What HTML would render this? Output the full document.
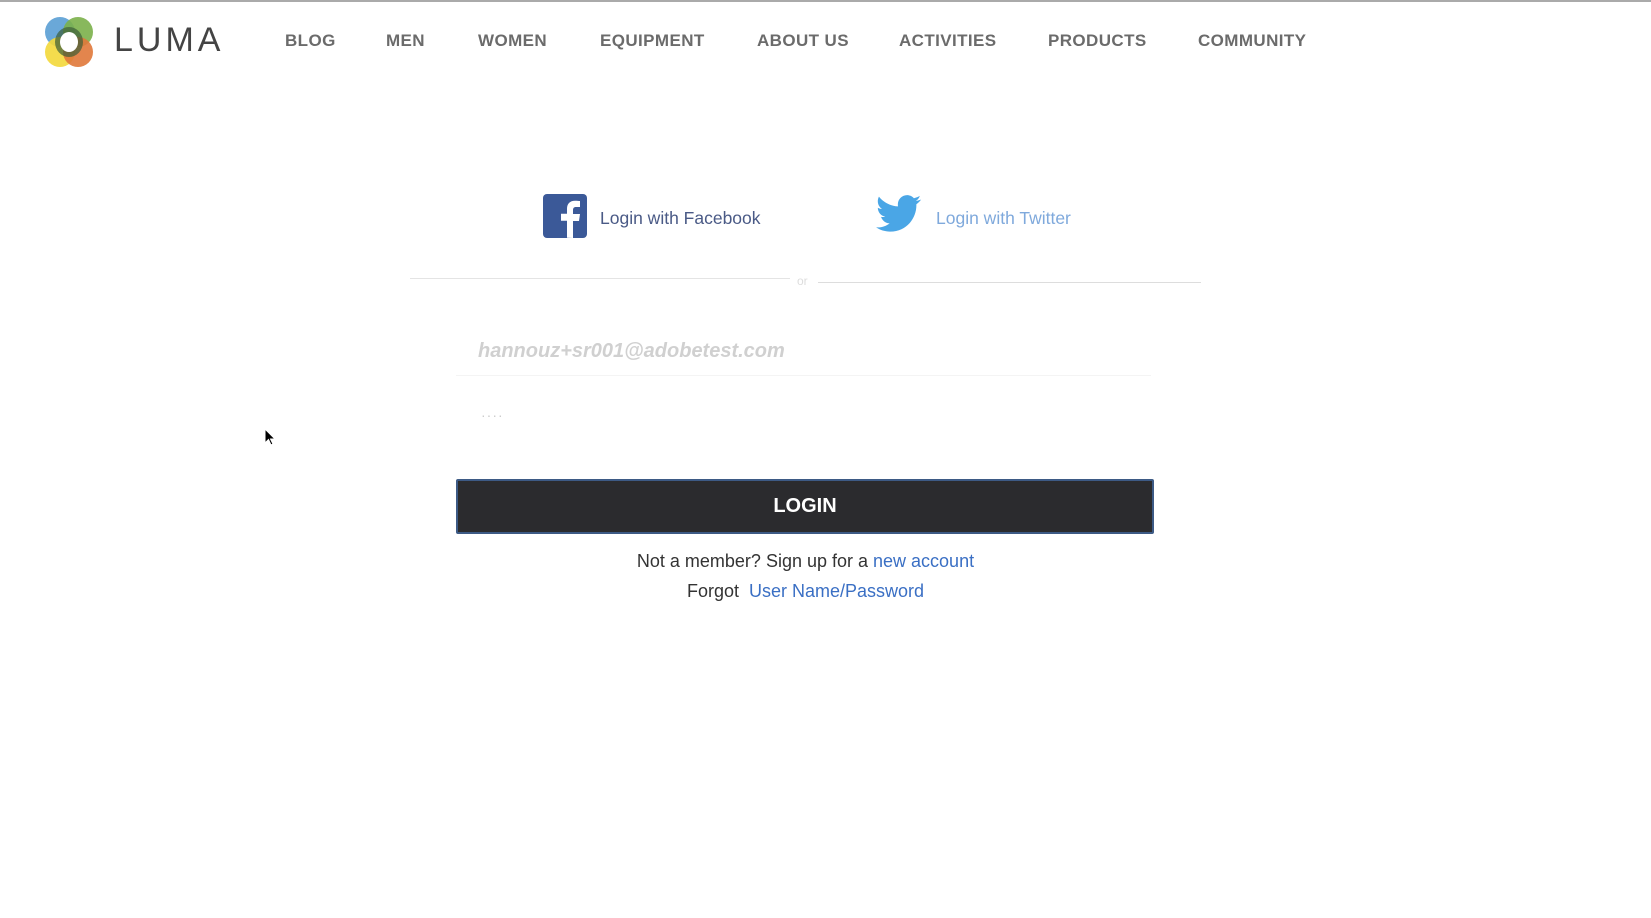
<!DOCTYPE html>
<html><head><meta charset="utf-8"><style>
body{margin:0;width:1651px;height:918px;background:#fff;font-family:"Liberation Sans",sans-serif;position:relative;overflow:hidden}
.top{position:absolute;left:0;top:0;width:1651px;height:2px;background:#aaa}
.a{position:absolute;white-space:nowrap}
.nav{top:31px;font-size:17px;letter-spacing:0.4px;font-weight:bold;color:#6b6b6b}
</style></head><body>
<div class="top"></div>
<svg class="a" style="left:38px;top:12px" width="62" height="60" viewBox="0 0 62 60">
<ellipse cx="22" cy="20" rx="15" ry="15" fill="#5a9fd4" opacity=".9"/>
<ellipse cx="40" cy="20" rx="15" ry="15" fill="#7bb04a" opacity=".9"/>
<ellipse cx="22" cy="40" rx="15" ry="15" fill="#f3d83a" opacity=".9"/>
<ellipse cx="40" cy="40" rx="15" ry="15" fill="#e0783a" opacity=".9"/>
<ellipse cx="31" cy="30" rx="14" ry="15" fill="#3c5c38" opacity=".7"/>
<ellipse cx="31" cy="30" rx="9" ry="10" fill="#fff"/>
</svg>
<div class="a" style="left:114px;top:21px;font-size:34px;letter-spacing:4px;color:#444">LUMA</div>
<div class="a nav" style="left:285px">BLOG</div>
<div class="a nav" style="left:386px">MEN</div>
<div class="a nav" style="left:478px">WOMEN</div>
<div class="a nav" style="left:600px">EQUIPMENT</div>
<div class="a nav" style="left:757px">ABOUT US</div>
<div class="a nav" style="left:899px">ACTIVITIES</div>
<div class="a nav" style="left:1048px">PRODUCTS</div>
<div class="a nav" style="left:1198px">COMMUNITY</div>

<svg class="a" style="left:543px;top:194px" width="44" height="44" viewBox="0 0 44 44"><rect width="44" height="44" rx="4" fill="#3b5998"/><path d="M30 44V27h6l1-7h-7v-4c0-2 1-3 3-3h4V7c-1 0-3-.3-5-.3-5 0-8 3-8 8v5h-6v7h6v17z" fill="#fff"/></svg>
<div class="a" style="left:600px;top:208px;font-size:17.5px;color:#4a5a86">Login with Facebook</div>
<svg class="a" style="left:876px;top:194px" width="46" height="42" viewBox="0 0 24 22"><path d="M23.6 2.9c-.9.4-1.8.6-2.8.8 1-.6 1.8-1.6 2.1-2.7-.9.6-2 1-3.1 1.2C18.9 1.2 17.6.6 16.2.6c-2.7 0-4.8 2.2-4.8 4.8 0 .4 0 .8.1 1.1C7.4 6.3 3.9 4.4 1.5 1.4c-.4.7-.6 1.6-.6 2.4 0 1.700.9 3.2 2.2 4-.8 0-1.5-.2-2.2-.6 0 2.3 1.7 4.3 3.9 4.7-.7.2-1.5.2-2.2.1.6 1.9 2.4 3.4 4.5 3.4-1.700 1.3-3.7 2.1-6 2.1H0c2.1 1.4 4.7 2.2 7.4 2.2 8.9 0 13.7-7.4 13.7-13.7v-.6c.9-.7 1.8-1.5 2.5-2.5z" fill="#4aa6e6"/></svg>
<div class="a" style="left:936px;top:208px;font-size:17.5px;color:#7fa9dc">Login with Twitter</div>

<div class="a" style="left:410px;top:278px;width:380px;height:1px;background:#e4e4e4"></div>
<div class="a" style="left:797px;top:274px;font-size:12px;color:#ddd">or</div>
<div class="a" style="left:818px;top:282px;width:383px;height:1px;background:#ddd"></div>

<div class="a" style="left:456px;top:324px;width:695px;height:51px;border-bottom:1px solid #f4f4f4"></div>
<div class="a" style="left:478px;top:340px;font-size:20px;font-style:italic;font-weight:bold;color:#d0d0d0">hannouz+sr001@adobetest.com</div>
<div class="a" style="left:481px;top:407px;font-size:14px;color:#ccc;letter-spacing:1px">····</div>

<div class="a" style="left:456px;top:479px;width:694px;height:51px;background:#2b2b2e;border:2px solid #3d5a85;border-radius:2px;color:#fff;font-weight:bold;font-size:20px;text-align:center;line-height:51px">LOGIN</div>

<div class="a" style="left:0;width:1611px;top:551px;text-align:center;font-size:18px;color:#333">Not a member? Sign up for a <span style="color:#3a6fc4">new account</span></div>
<div class="a" style="left:0;width:1611px;top:581px;text-align:center;font-size:18px;color:#333">Forgot&nbsp; <span style="color:#3a6fc4">User Name/Password</span></div>

<svg class="a" style="left:264px;top:428px" width="12" height="18" viewBox="0 0 12 18"><path d="M1 1v14l3.5-3.5 2.5 5.5 2-1-2.5-5H11z" fill="#000" stroke="#fff" stroke-width="1"/></svg>
</body></html>
